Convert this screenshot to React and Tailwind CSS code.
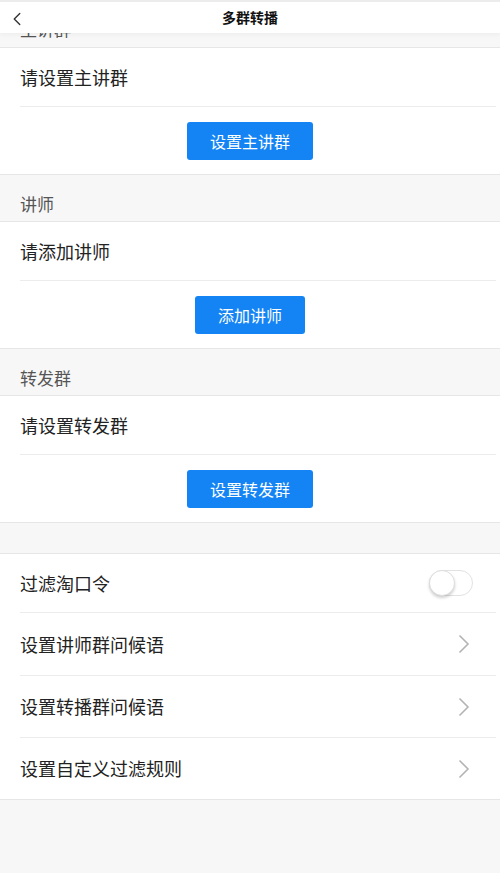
import { ChevronLeft } from "lucide-react";

const font = { fontFamily: '"Noto Sans CJK SC", "Noto Sans", sans-serif' };

function SectionHeader({ title }) {
  return (
    <div className="h-[47px] flex items-end pb-[5px] px-5 bg-[#f7f7f7] text-[17px] text-[#555] border-b border-[#e6e6e6]">
      {title}
    </div>
  );
}

function GroupCard({ placeholder, action }) {
  return (
    <div className="bg-white border-b border-[#e6e6e6]">
      <div className="pl-5">
        <div className="h-[59px] flex items-center text-[18px] text-[#222] border-b border-[#ececec] mr-1">
          {placeholder}
        </div>
      </div>
      <div className="h-[67px] flex items-center justify-center">
        <button className="h-[38px] px-[23px] rounded-[3px] bg-[#1484f5] text-white text-[16px]">
          {action}
        </button>
      </div>
    </div>
  );
}

function Toggle() {
  return (
    <div className="w-[44px] h-[26px] rounded-full border border-[#e2e2e2] bg-white flex items-center">
      <div className="w-[26px] h-[26px] rounded-full bg-white border border-[#dedede] shadow-[0_2px_3px_rgba(0,0,0,0.18)] -ml-px" />
    </div>
  );
}

function Chevron() {
  return (
    <svg width="12" height="20" viewBox="0 0 12 20" fill="none" className="-mr-[2px]">
      <polyline points="1.5,1.5 10,10 1.5,18.5" stroke="#b4b4b4" strokeWidth="1.6" />
    </svg>
  );
}

function SettingRow({ label, right, height, last }) {
  return (
    <div className="pl-5">
      <div
        className={
          "flex items-center justify-between pr-[28px] text-[18px] text-[#222] mr-1 " +
          height +
          (last ? "" : " border-b border-[#ececec]")
        }
      >
        <span>{label}</span>
        {right}
      </div>
    </div>
  );
}

export default function App() {
  return (
    <div className="min-h-[873px] bg-[#f7f7f7]" style={font}>
      {/* nav */}
      <div className="relative z-10 h-[33px] bg-white border-t-2 border-[#ececec] flex items-center justify-center shadow-[0_2px_4px_rgba(0,0,0,0.04)]">
        <ChevronLeft size={22} strokeWidth={1.5} className="absolute left-[6px] top-[6px] text-[#333]" />
        <span className="text-[14px] font-bold text-[#111]">多群转播</span>
      </div>

      {/* first header, mostly covered by the nav */}
      <div className="h-[15px] overflow-hidden bg-[#f7f7f7] px-5 border-b border-[#e6e6e6]">
        <div className="-mt-[16px] text-[17px] leading-[24px] text-[#555]">主讲群</div>
      </div>
      <GroupCard placeholder="请设置主讲群" action="设置主讲群" />

      <SectionHeader title="讲师" />
      <GroupCard placeholder="请添加讲师" action="添加讲师" />

      <SectionHeader title="转发群" />
      <GroupCard placeholder="请设置转发群" action="设置转发群" />

      <div className="h-[31px] border-b border-[#e6e6e6]" />

      <div className="bg-white border-b border-[#e6e6e6]">
        <div className="pl-5">
          <div className="h-[59px] flex items-center justify-between pr-[23px] text-[18px] text-[#222] border-b border-[#ececec] mr-1">
            <span>过滤淘口令</span>
            <Toggle />
          </div>
        </div>
        <SettingRow label="设置讲师群问候语" right={<Chevron />} height="h-[63px]" />
        <SettingRow label="设置转播群问候语" right={<Chevron />} height="h-[62px]" />
        <SettingRow label="设置自定义过滤规则" right={<Chevron />} height="h-[61px]" last />
      </div>
    </div>
  );
}
